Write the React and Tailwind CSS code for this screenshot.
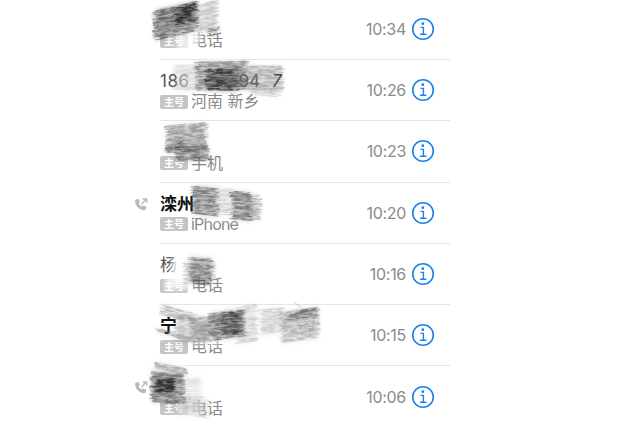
import React from "react";

const calls = [
  { name: "", label: "电话", time: "10:34" },
  { name: "186", tail: true, label: "河南 新乡", time: "10:26" },
  { name: "", label: "手机", time: "10:23" },
  { name: "滦州", bold: true, out: true, label: "iPhone", time: "10:20" },
  { name: "杨", label: "电话", time: "10:16" },
  { name: "宁", bold: true, label: "电话", time: "10:15" },
  { name: "", out: true, label: "电话", time: "10:06" },
];

// Soft white patches that fade the text: x, y, width, height, opacity
const fades = [
  [176, 30, 22, 20, 0.65],
  [190, 34, 12, 8, 0.5],
  [178, 62, 20, 28, 0.45],
  [178, 152, 28, 8, 0.4],
  [205, 214, 40, 7, 0.5],
  [172, 256, 14, 26, 0.8],
  [165, 276, 28, 14, 0.65],
  [190, 338, 30, 7, 0.5],
  [178, 400, 24, 18, 0.6],
  [205, 57, 35, 5, 0.8],
  [160, 362, 26, 6, 0.9],
];

// Pencil hatching: x, y, width, height, slope, grey, opacity, strokes
const hatches = [
  [155, 11, 42, 29, -9, "#444", 0.55, 80],
  [157, 9, 28, 20, -5, "#444", 0.3, 25],
  [176, 7, 19, 18, -5, "#111", 0.6, 30],
  [198, 5, 19, 29, -5, "#888", 0.36, 40],
  [208, 29, 10, 7, -2, "#444", 0.55, 9],
  [174, 65, 28, 26, 0, "#999", 0.28, 28],
  [197, 62, 50, 28, -1, "#555", 0.5, 65],
  [207, 69, 30, 21, 1, "#111", 0.58, 42],
  [232, 66, 50, 24, 0, "#777", 0.42, 55],
  [250, 87, 30, 7, 2, "#999", 0.35, 10],
  [167, 126, 39, 27, -3, "#666", 0.5, 65],
  [166, 147, 18, 5, -6, "#444", 0.5, 8],
  [177, 147, 31, 14, -1, "#444", 0.52, 36],
  [193, 186, 24, 28, 2, "#444", 0.55, 60],
  [216, 188, 16, 27, 0, "#999", 0.32, 34],
  [232, 191, 19, 28, 2, "#444", 0.55, 50],
  [244, 195, 16, 24, 1, "#666", 0.4, 34],
  [190, 257, 21, 26, 1, "#444", 0.52, 48],
  [185, 263, 29, 21, -1, "#888", 0.35, 32],
  [162, 305, 33, 9, 9, "#777", 0.42, 18],
  [157, 328, 32, 4, 9, "#777", 0.42, 9],
  [176, 317, 33, 26, 0, "#888", 0.38, 45],
  [191, 319, 30, 23, -3, "#777", 0.4, 35],
  [210, 313, 34, 27, -3, "#444", 0.48, 52],
  [223, 312, 19, 24, -2, "#111", 0.45, 35],
  [237, 307, 20, 37, -3, "#999", 0.34, 38],
  [261, 309, 22, 26, -2, "#999", 0.34, 32],
  [282, 312, 36, 31, -5, "#777", 0.4, 55],
  [287, 313, 30, 8, -5, "#444", 0.5, 18],
  [152, 371, 31, 31, 2, "#333", 0.52, 75],
  [154, 377, 20, 15, 1, "#111", 0.6, 24],
  [155, 362, 32, 7, 7, "#777", 0.45, 13],
  [183, 378, 18, 33, -1, "#aaa", 0.25, 32],
  [178, 395, 30, 20, 3, "#aaa", 0.28, 28],
];

function generator(seed) {
  let value = seed;
  return () => {
    value = (value * 16807) % 2147483647;
    return value / 2147483647;
  };
}

function Hatch({ data, index }) {
  const [x, y, w, h, slope, color, opacity, count] = data;
  const rnd = generator((index + 1) * 9371);
  let d = "";
  for (let i = 0; i < count; i++) {
    const yy = y + rnd() * h;
    const x1 = x + rnd() * 7 - 3;
    const x2 = x + w - rnd() * 7 + 3;
    d += `M${x1.toFixed(1)} ${yy.toFixed(1)}Q${((x1 + x2) / 2).toFixed(1)} ${(yy + slope / 2 + rnd() * 2 - 1).toFixed(1)} ${x2.toFixed(1)} ${(yy + slope + rnd() * 2 - 1).toFixed(1)}`;
  }
  return <path d={d} fill="none" stroke={color} strokeWidth="1.1" opacity={opacity} />;
}

function Wash({ data }) {
  const [x, y, w, h, slope, color, opacity] = data;
  return (
    <polygon
      points={`${x},${y} ${x + w},${y + slope} ${x + w},${y + h + slope} ${x},${y + h}`}
      fill={color}
      opacity={opacity * 0.52}
    />
  );
}

function Scribbles() {
  return (
    <svg className="pointer-events-none absolute inset-0" width="635" height="425" viewBox="0 0 635 425">
      <defs>
        <filter id="soft" x="-50%" y="-50%" width="200%" height="200%">
          <feGaussianBlur stdDeviation="2" />
        </filter>
        <filter id="grain" filterUnits="userSpaceOnUse" x="0" y="0" width="635" height="425">
          <feTurbulence type="fractalNoise" baseFrequency="0.12 0.4" numOctaves="3" seed="4" result="noise" />
          <feColorMatrix in="noise" type="matrix" values="0 0 0 0 0  0 0 0 0 0  0 0 0 0 0  2.4 0 0 0 -0.5" result="mask" />
          <feComposite in="SourceGraphic" in2="mask" operator="in" />
          <feGaussianBlur stdDeviation="0.45" />
        </filter>
      </defs>
      <g fill="#fff" filter="url(#soft)">
        {fades.map(([x, y, w, h, o], i) => (
          <rect key={i} x={x} y={y} width={w} height={h} opacity={o} />
        ))}
      </g>
      <g filter="url(#soft)">
        {hatches.map((data, i) => (
          <Wash key={i} data={data} />
        ))}
      </g>
      <g filter="url(#grain)">
        {hatches.map((data, i) => (
          <Hatch key={i} data={data} index={i} />
        ))}
        <path d="M151 14l5 17M170 9l-14 8M292 318q10 4 10 18M302 318q9 6 8 17M313 314q3 10-4 22M294 302l10 8" fill="none" stroke="#777" opacity=".45" />
      </g>
    </svg>
  );
}

function OutgoingIcon() {
  return (
    <svg className="mt-[15px] ml-[2px] h-[13px] w-[13px]" viewBox="0 0 13 13">
      <path d="M1 1.8 2.6.9c.5-.2.9 0 1.1.4l1 2.1c.2.4.1.9-.2 1.2l-.8.8c.6 1.3 1.700 2.400 3.200 3.200l.9-.8c.3-.3.8-.3 1.200-.1l2 1.100c.4.3.6.7.3 1.100l-.9 1.500c-.4.7-1 1-1.700.9C4 11.500.8 8.200.1 3.500c-.1-.7.2-1.400.9-1.700Z" fill="#b9b9bb" />
      <path d="m6.3 6.2 5.200-5.200M7.600 1h4.100v4.100" fill="none" stroke="#b9b9bb" strokeWidth="1.300" />
    </svg>
  );
}

function InfoIcon() {
  return (
    <svg className="ml-[5px] h-6 w-6 shrink-0" viewBox="0 0 24 24" fill="none" stroke="#1a80ee">
      <circle cx="12" cy="12" r="10.3" strokeWidth="1.6" />
      <circle cx="11.8" cy="6.7" r="1.4" fill="#1a80ee" stroke="none" />
      <path d="M9.5 10.400h2.900v6.600M9 17.200h6.400" strokeWidth="1.4" />
    </svg>
  );
}

function CallRow({ call, last }) {
  return (
    <div className="flex h-[61.3px] shrink-0">
      <div className="w-[27px] shrink-0">{call.out && <OutgoingIcon />}</div>
      <div className={`flex min-w-0 flex-1 justify-between ${last ? "" : "border-b border-[#e5e5e6]"}`}>
        <div className="pt-[10.4px]">
          <div className={`flex h-[22px] items-center text-[17px] leading-[22px] whitespace-pre ${call.bold ? "font-bold text-[#111]" : "text-[#555]"}`}>
            <span className={call.tail ? "tracking-[0.5px]" : ""}>{call.name}</span>
            {call.tail && (
              <>
                <span className="ml-[49px]">94</span>
                <span className="ml-[12px] text-[#333] italic">7</span>
              </>
            )}
          </div>
          <div className="flex h-[19px] items-center gap-[3px]">
            <span className="flex h-[14px] w-[28px] items-center justify-center rounded-[2px] bg-[#c5c5c7] text-[10px] leading-none font-bold text-white">主号</span>
            <span className={`text-[16px] leading-[19px] text-[#89898c] ${call.label === "iPhone" ? "tracking-[-0.8px]" : ""}`}>{call.label}</span>
          </div>
        </div>
        <div className="flex items-center pr-[15px]">
          <span className="text-[16px] tracking-[-0.3px] text-[#8b8b8e]">{call.time}</span>
          <InfoIcon />
        </div>
      </div>
    </div>
  );
}

export default function App() {
  return (
    <div className="relative h-[425px] w-[635px] overflow-hidden bg-white font-[Inter,'Noto_Sans_CJK_SC',sans-serif]">
      <div className="-mt-[1.4px] ml-[133px] flex w-[317px] flex-col">
        {calls.map((call, i) => (
          <CallRow key={call.time} call={call} last={i === calls.length - 1} />
        ))}
      </div>
      <Scribbles />
    </div>
  );
}
